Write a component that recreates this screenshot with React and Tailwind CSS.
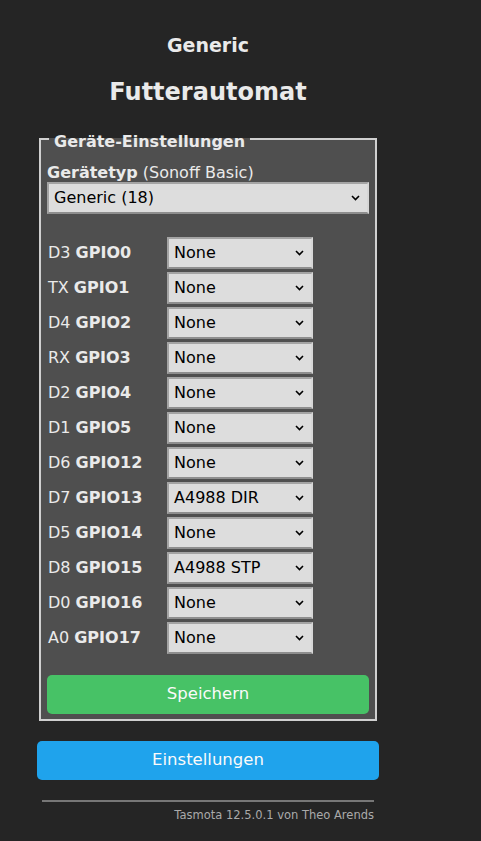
import React from "react";

const rows = [
  ["D3", "GPIO0", "None"],
  ["TX", "GPIO1", "None"],
  ["D4", "GPIO2", "None"],
  ["RX", "GPIO3", "None"],
  ["D2", "GPIO4", "None"],
  ["D1", "GPIO5", "None"],
  ["D6", "GPIO12", "None"],
  ["D7", "GPIO13", "A4988 DIR"],
  ["D5", "GPIO14", "None"],
  ["D8", "GPIO15", "A4988 STP"],
  ["D0", "GPIO16", "None"],
  ["A0", "GPIO17", "None"],
];

function Chevron() {
  return (
    <svg width="9" height="6" viewBox="0 0 9 6" className="shrink-0">
      <path d="M1 1 L4.5 4.5 L8 1" fill="none" stroke="#000" strokeWidth="1.6" />
    </svg>
  );
}

function Select({ value, className }) {
  return (
    <div
      className={
        "flex items-center justify-between bg-[#dddddd] text-black border-2 border-solid border-t-[#a4a4a4] border-l-[#a4a4a4] border-b-[#8e8e8e] border-r-[#d6d6d6] pl-[5px] pr-[7px] " +
        className
      }
    >
      <span>{value}</span>
      <Chevron />
    </div>
  );
}

export default function App() {
  return (
    <div
      className="min-h-[841px] bg-[#252525] text-[#eaeaea] text-[16px]"
      style={{ fontFamily: '"DejaVu Sans", Verdana, sans-serif' }}
    >
      <div className="w-[342px] ml-[37px] pt-[34px]">
        <div className="text-center">
          <div className="font-bold text-[19px] leading-[22px]">Generic</div>
          <div className="font-bold text-[24px] leading-[30px] mt-[21px]">Futterautomat</div>
        </div>
        <fieldset className="mt-[20px] mx-[2px] border-2 border-solid border-[#d0d0d0] bg-[#4f4f4f] px-[6px] pb-[5px]">
          <legend className="ml-[2px] px-[5px] pt-[6px] font-bold leading-[18px]">Geräte-Einstellungen</legend>
          <div className="leading-[18px] mt-[13px]">
            <b>Gerätetyp</b> (Sonoff Basic)
          </div>
          <Select value="Generic (18)" className="h-[32px] w-full" />
          <div className="mt-[23px] flex flex-col gap-[3px]">
            {rows.map(([a, b, v]) => (
              <div key={b} className="flex items-center h-[32px]">
                <div className="w-[120px] pl-[1px]">
                  {a} <b>{b}</b>
                </div>
                <Select value={v} className="h-[32px] w-[146px]" />
              </div>
            ))}
          </div>
          <button className="mt-[21px] w-full h-[39px] rounded-[5px] bg-[#47c266] text-[#fafafa] text-[16.5px]">
            Speichern
          </button>
        </fieldset>
        <button className="mt-[20px] w-full h-[39px] rounded-[5px] bg-[#1fa3ec] text-[#fafafa] text-[16.5px]">
          Einstellungen
        </button>
        <div className="mt-[20px] mx-[5px] h-[2px] bg-[#777]" />
        <div className="text-right text-[11.5px] text-[#aaaaaa] mr-[5px] mt-[5px]">
          Tasmota 12.5.0.1 von Theo Arends
        </div>
      </div>
    </div>
  );
}
